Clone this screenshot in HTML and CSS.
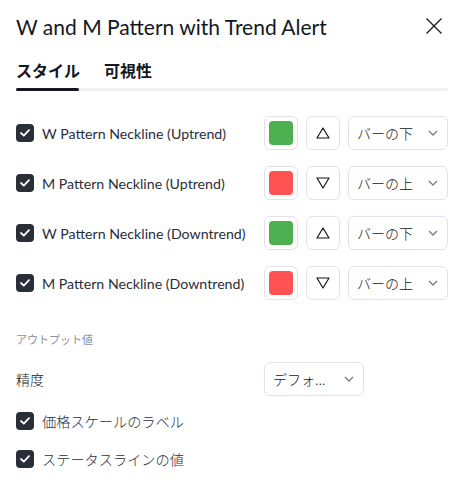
FILE: index.html
```html
<!DOCTYPE html>
<html lang="ja">
<head>
  <meta charset="UTF-8" />
  <meta name="viewport" content="width=device-width, initial-scale=1.0" />
  <title>W and M Pattern with Trend Alert</title>
  <link rel="stylesheet" href="styles.css">
</head>
<body>
  <div class="dialog">
    <div class="header">
      <h1 class="title">W and M Pattern with Trend Alert</h1>
      <span class="close">
        <svg width="16" height="16" viewBox="0 0 16 16"><path d="M0.5 0.5 L15.5 15.5 M15.5 0.5 L0.5 15.5" stroke="#131722" stroke-width="1.3" fill="none"/></svg>
      </span>
    </div>

    <div class="tabs">
      <span class="tab active">スタイル</span>
      <span class="tab">可視性</span>
    </div>
    <div class="track"><div class="track-active"></div></div>

    <div class="content">
      <div class="row">
        <label class="check"><span class="box"><svg width="10" height="8" viewBox="0 0 10 8"><path d="M1 4 L3.8 6.6 L9 1.2" stroke="#fff" stroke-width="1.8" fill="none" stroke-linecap="round" stroke-linejoin="round"/></svg></span><span class="label-text">W Pattern Neckline (Uptrend)</span></label>
        <span class="swatch"><span class="color green"></span></span>
        <span class="shape"><svg width="14" height="12" viewBox="0 0 14 12"><path d="M7 1 L13 11 L1 11 Z" stroke="#131722" stroke-width="1.2" fill="none" stroke-linejoin="round"/></svg></span>
        <span class="select wide"><span>バーの下</span><svg class="chev" width="10" height="6" viewBox="0 0 10 6"><path d="M1 1 L5 5 L9 1" stroke="#787b86" stroke-width="1.3" fill="none"/></svg></span>
      </div>
      <div class="row">
        <label class="check"><span class="box"><svg width="10" height="8" viewBox="0 0 10 8"><path d="M1 4 L3.8 6.6 L9 1.2" stroke="#fff" stroke-width="1.8" fill="none" stroke-linecap="round" stroke-linejoin="round"/></svg></span><span class="label-text">M Pattern Neckline (Uptrend)</span></label>
        <span class="swatch"><span class="color red"></span></span>
        <span class="shape"><svg width="14" height="12" viewBox="0 0 14 12"><path d="M1 1 L13 1 L7 11 Z" stroke="#131722" stroke-width="1.2" fill="none" stroke-linejoin="round"/></svg></span>
        <span class="select wide"><span>バーの上</span><svg class="chev" width="10" height="6" viewBox="0 0 10 6"><path d="M1 1 L5 5 L9 1" stroke="#787b86" stroke-width="1.3" fill="none"/></svg></span>
      </div>
      <div class="row">
        <label class="check"><span class="box"><svg width="10" height="8" viewBox="0 0 10 8"><path d="M1 4 L3.8 6.6 L9 1.2" stroke="#fff" stroke-width="1.8" fill="none" stroke-linecap="round" stroke-linejoin="round"/></svg></span><span class="label-text">W Pattern Neckline (Downtrend)</span></label>
        <span class="swatch"><span class="color green"></span></span>
        <span class="shape"><svg width="14" height="12" viewBox="0 0 14 12"><path d="M7 1 L13 11 L1 11 Z" stroke="#131722" stroke-width="1.2" fill="none" stroke-linejoin="round"/></svg></span>
        <span class="select wide"><span>バーの下</span><svg class="chev" width="10" height="6" viewBox="0 0 10 6"><path d="M1 1 L5 5 L9 1" stroke="#787b86" stroke-width="1.3" fill="none"/></svg></span>
      </div>
      <div class="row">
        <label class="check"><span class="box"><svg width="10" height="8" viewBox="0 0 10 8"><path d="M1 4 L3.8 6.6 L9 1.2" stroke="#fff" stroke-width="1.8" fill="none" stroke-linecap="round" stroke-linejoin="round"/></svg></span><span class="label-text">M Pattern Neckline (Downtrend)</span></label>
        <span class="swatch"><span class="color red"></span></span>
        <span class="shape"><svg width="14" height="12" viewBox="0 0 14 12"><path d="M1 1 L13 1 L7 11 Z" stroke="#131722" stroke-width="1.2" fill="none" stroke-linejoin="round"/></svg></span>
        <span class="select wide"><span>バーの上</span><svg class="chev" width="10" height="6" viewBox="0 0 10 6"><path d="M1 1 L5 5 L9 1" stroke="#787b86" stroke-width="1.3" fill="none"/></svg></span>
      </div>

      <div class="section-title">アウトプット値</div>

      <div class="row precision">
        <span class="plain-label">精度</span>
        <span class="select"><span>デフォ...</span><svg class="chev" width="10" height="6" viewBox="0 0 10 6"><path d="M1 1 L5 5 L9 1" stroke="#787b86" stroke-width="1.3" fill="none"/></svg></span>
      </div>

      <div class="row short first">
        <label class="check"><span class="box"><svg width="10" height="8" viewBox="0 0 10 8"><path d="M1 4 L3.8 6.6 L9 1.2" stroke="#fff" stroke-width="1.8" fill="none" stroke-linecap="round" stroke-linejoin="round"/></svg></span><span class="label-text">価格スケールのラベル</span></label>
      </div>
      <div class="row short">
        <label class="check"><span class="box"><svg width="10" height="8" viewBox="0 0 10 8"><path d="M1 4 L3.8 6.6 L9 1.2" stroke="#fff" stroke-width="1.8" fill="none" stroke-linecap="round" stroke-linejoin="round"/></svg></span><span class="label-text">ステータスラインの値</span></label>
      </div>
    </div>
  </div>
</body>
</html>
```

FILE: styles.css
```css
body {
  margin: 0;
  background-color: #fff;
  color: #131722;
  font-family: Lato, "Noto Sans CJK JP", sans-serif;
}

.dialog {
  width: 464px;
}

.header {
  display: flex;
  align-items: center;
  justify-content: space-between;
  height: 52px;
  padding: 0 22px 0 16px;
}

.title {
  margin: 0;
  font-size: 21px;
  font-weight: 400;
  color: #131722;
}

.close {
  display: flex;
}

.tabs {
  display: flex;
  gap: 24px;
  margin-top: 8px;
  padding: 0 16px;
}

.tab {
  font-family: "Noto Sans CJK JP", sans-serif;
  font-size: 16px;
  line-height: 20px;
  font-weight: 700;
}

.track {
  margin: 8px 16px 0 16px;
  height: 3px;
  border-radius: 2px;
  background-color: #f0f0f0;
}

.track-active {
  width: 63px;
  height: 3px;
  border-radius: 2px;
  background-color: #131722;
}

.content {
  display: flex;
  flex-direction: column;
  gap: 16px;
  padding: 25px 16px 0 16px;
}

.row {
  display: flex;
  align-items: center;
  height: 34px;
}

.check {
  display: flex;
  align-items: center;
  width: 248px;
  font-size: 14.2px;
  color: #2a2e39;
}

.box {
  display: flex;
  align-items: center;
  justify-content: center;
  width: 18px;
  height: 18px;
  border-radius: 4px;
  background-color: #2a2e39;
  flex-shrink: 0;
}

.label-text {
  margin-left: 8px;
}

.swatch, .shape {
  display: flex;
  align-items: center;
  justify-content: center;
  width: 32px;
  height: 32px;
  border: 1px solid #e0e3eb;
  border-radius: 6px;
  margin-right: 8px;
}

.color {
  width: 24px;
  height: 24px;
  border-radius: 4px;
}

.green { background-color: #4caf50; }
.red { background-color: #ff5252; }

.select {
  display: flex;
  align-items: center;
  justify-content: space-between;
  box-sizing: border-box;
  width: 100px;
  height: 34px;
  padding: 0 9px 0 8px;
  border: 1px solid #e0e3eb;
  border-radius: 6px;
  font-family: "Noto Sans CJK JP", sans-serif;
  font-size: 14px;
  font-weight: 300;
}

.section-title {
  margin-top: 14px;
  font-family: "Noto Sans CJK JP", sans-serif;
  font-size: 11px;
  line-height: 18px;
  color: #8c8f99;
}

.precision {
  margin-top: -2px;
}

.plain-label {
  width: 248px;
  font-family: "Noto Sans CJK JP", sans-serif;
  font-size: 14px;
  font-weight: 300;
}

.short.first {
  margin-top: -8px;
}

.short + .short {
  margin-top: -12px;
}

.short .label-text {
  font-family: "Noto Sans CJK JP", sans-serif;
  font-weight: 300;
}
```
